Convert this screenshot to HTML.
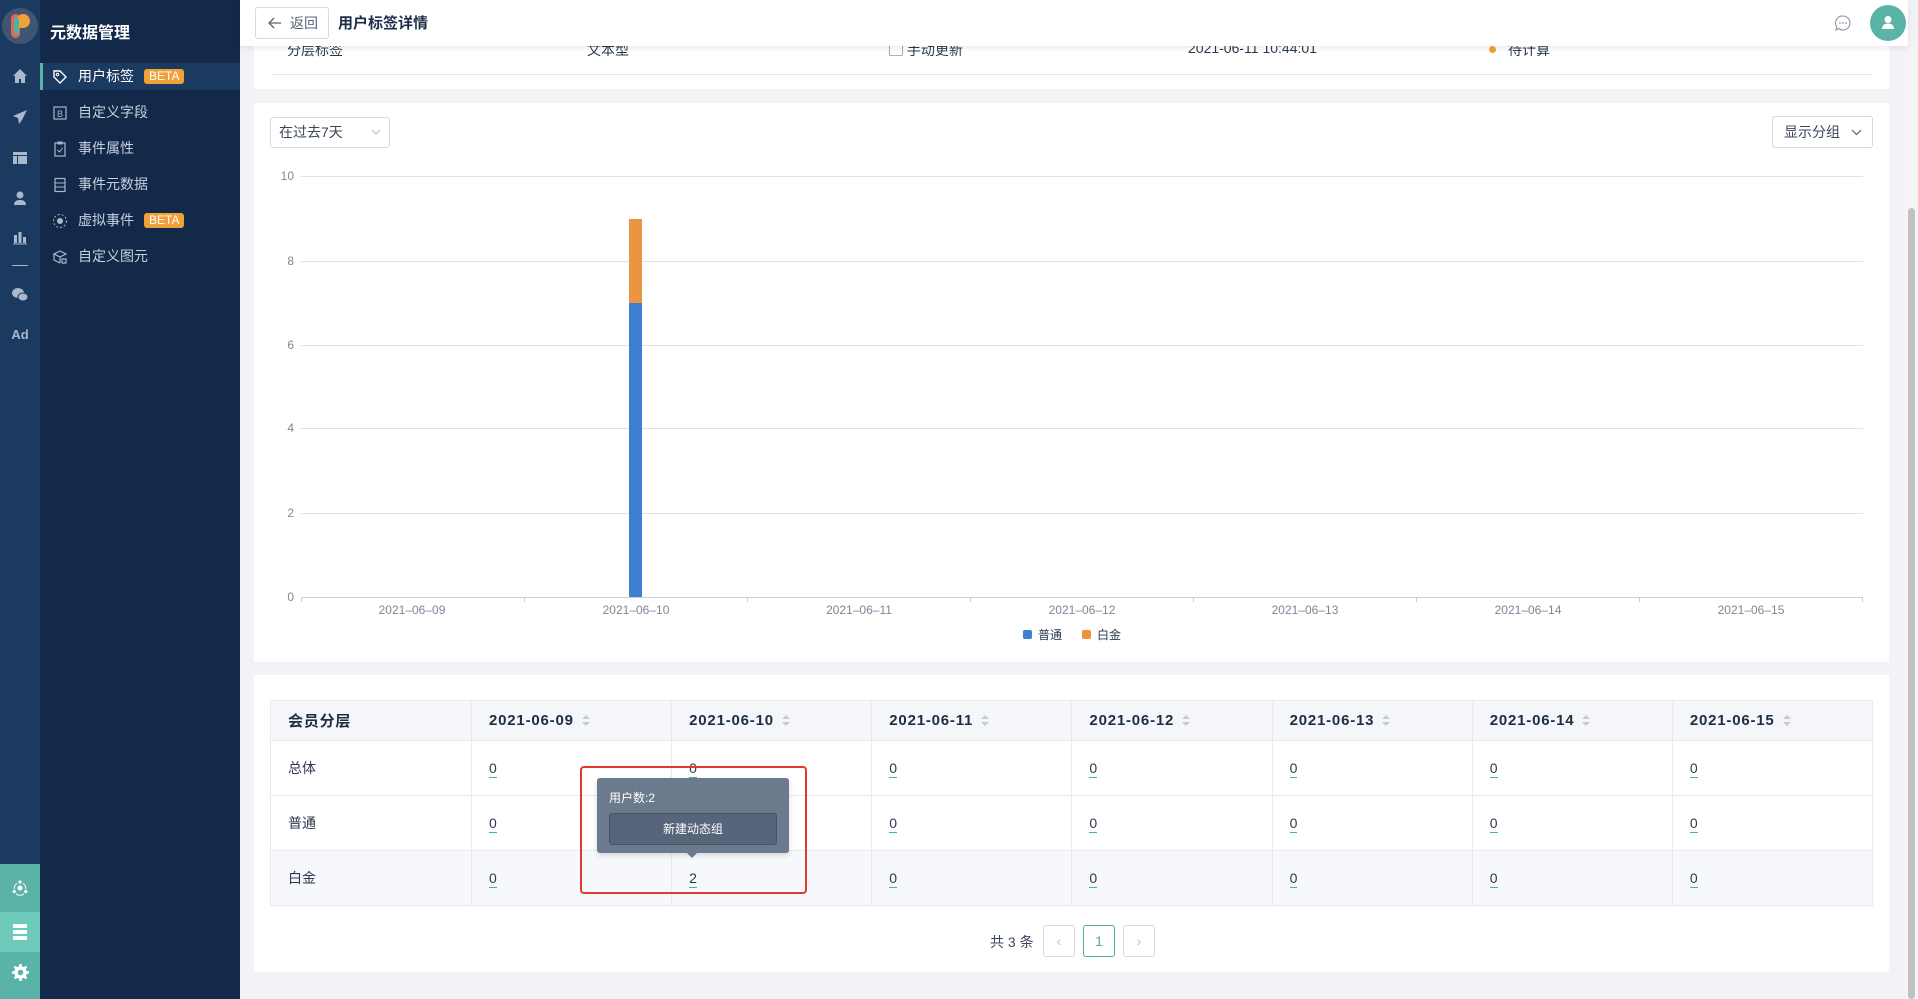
<!DOCTYPE html>
<html><head><meta charset="utf-8">
<style>
*{margin:0;padding:0;box-sizing:border-box}
body{width:1918px;height:999px;overflow:hidden;background:#f2f3f7;font-family:"Liberation Sans","Noto Sans CJK SC",sans-serif;color:#2b3a4e;position:relative}
.abs{position:absolute}
.rail{left:0;top:0;width:40px;height:999px;background:#1b3a60}
.side{left:40px;top:0;width:200px;height:999px;background:#12294a}
.ri{position:absolute;left:0;width:40px;text-align:center;color:#a9b8cc}
.mi{position:absolute;left:0;width:200px;height:27px;line-height:27px;color:#c5d0de;font-size:14px;padding-left:38px}
.mi svg{position:absolute;left:12px;top:6px}
.beta{display:inline-block;background:#f0a13a;color:#fff;font-size:12px;line-height:15px;padding:0 5px;border-radius:3px;margin-left:10px;vertical-align:1px}
.hdr{left:240px;top:0;width:1668px;height:46px;background:#fff;box-shadow:0 2px 6px rgba(0,0,0,.08);z-index:5}
.card{background:#fff;position:absolute}
.gl{position:absolute;left:301px;width:1562px;height:1px;background:#dfe2e7}
.yl{position:absolute;width:24px;left:270px;text-align:right;font-size:12px;color:#7c8798}
.xl{position:absolute;width:120px;text-align:center;font-size:12px;color:#7c8798;top:603px}
table{border-collapse:collapse;position:absolute;left:270px;top:700px;width:1603px;font-size:14px;table-layout:fixed}
td,th{border:1px solid #e8eaee;text-align:left;padding-left:17px}
th{height:40px;background:#f5f6fa;font-weight:bold;color:#1e2d45;font-size:15px;letter-spacing:.8px}
td{height:55px;color:#2b3a4e}
tr.alt td{background:#f6f8fc}
.u{border-bottom:1px solid #4cae9c;padding-bottom:1px}
.s{display:inline-block;width:8px;margin-left:8px;vertical-align:middle;position:relative;height:12px}
.s:before{content:"";position:absolute;left:0;top:0;border:4px solid transparent;border-bottom:4px solid #c5c9d0;border-top:0}
.s:after{content:"";position:absolute;left:0;top:7px;border:4px solid transparent;border-top:4px solid #c5c9d0;border-bottom:0}
.pg{position:absolute;top:925px;width:32px;height:32px;border:1px solid #d6dae0;border-radius:3px;text-align:center;line-height:30px;font-size:14px;color:#b8bfc9;background:#fff}
</style></head><body>
<div class="abs rail">
 <div class="abs" style="left:2px;top:8px;width:36px;height:36px;border-radius:50%;background:#3e5670;overflow:hidden">
  <div class="abs" style="left:9px;top:6px;width:9px;height:24px;border-radius:5px;background:#e8645a"></div>
  <div class="abs" style="left:14px;top:6px;width:14px;height:14px;border-radius:7px 7px 7px 2px;background:#f3a23a"></div>
  <div class="abs" style="left:12px;top:10px;width:5px;height:16px;background:#4cb4a6"></div>
 </div>
 <div class="ri" style="top:68px"><svg width="16" height="16" viewBox="0 0 16 16"><path d="M8 1L1 8h2v7h4v-4h2v4h4V8h2z" fill="#a9b8cc"/></svg></div>
 <div class="ri" style="top:109px"><svg width="16" height="16" viewBox="0 0 16 16"><path d="M15 1L1 7l5 2 1 6 3-4z M6 9l9-8" fill="#a9b8cc"/></svg></div>
 <div class="ri" style="top:150px"><svg width="16" height="16" viewBox="0 0 16 16"><path d="M1 2h14v3H1zM1 6h4v8H1zM6 6h9v8H6z" fill="#a9b8cc"/></svg></div>
 <div class="ri" style="top:190px"><svg width="16" height="16" viewBox="0 0 16 16"><circle cx="8" cy="5" r="3.5" fill="#a9b8cc"/><path d="M2 15c0-4 3-5 6-5s6 1 6 5z" fill="#a9b8cc"/></svg></div>
 <div class="ri" style="top:229px"><svg width="16" height="16" viewBox="0 0 16 16"><path d="M2 6h3v8H2zM6.5 3h3v11h-3zM11 8h3v6h-3zM1 14.5h14v1H1z" fill="#a9b8cc"/></svg></div>
 <div class="abs" style="left:12px;top:265px;width:16px;height:1px;background:#a9b8cc"></div>
 <div class="ri" style="top:287px"><svg width="18" height="16" viewBox="0 0 18 16"><ellipse cx="7" cy="6" rx="6" ry="5" fill="#a9b8cc"/><ellipse cx="12" cy="10" rx="5" ry="4" fill="#a9b8cc" stroke="#1b3a60" stroke-width="1"/></svg></div>
 <div class="ri" style="top:327px;font-weight:bold;font-size:13px">Ad</div>
 <div class="abs" style="left:0;top:864px;width:40px;height:48px;background:#5bb2a6"></div>
 <div class="abs" style="left:0;top:912px;width:40px;height:40px;background:#6ecbba"></div>
 <div class="abs" style="left:0;top:952px;width:40px;height:47px;background:#5bb2a6"></div>
 <div class="ri" style="top:880px"><svg width="16" height="16" viewBox="0 0 16 16"><circle cx="8" cy="8" r="2.5" fill="#fff"/><circle cx="8" cy="2" r="1.6" fill="#fff"/><circle cx="2.2" cy="11.5" r="1.6" fill="#fff"/><circle cx="13.8" cy="11.5" r="1.6" fill="#fff"/><path d="M5 3.5A6 6 0 0 0 2.3 9M11 3.5A6 6 0 0 1 13.7 9M4 13.8a6 6 0 0 0 8 0" stroke="#fff" fill="none"/></svg></div>
 <div class="ri" style="top:923px"><svg width="16" height="18" viewBox="0 0 16 18"><rect x="1" y="1" width="14" height="4" fill="#fff"/><rect x="1" y="7" width="14" height="4" fill="#fff"/><rect x="1" y="13" width="14" height="4" fill="#fff"/></svg></div>
 <div class="ri" style="top:964px"><svg width="17" height="17" viewBox="0 0 16 16"><path d="M7 0h2l.4 2.2 1.6.7 1.9-1.3 1.4 1.4-1.3 1.9.7 1.6L16 7v2l-2.2.4-.7 1.6 1.3 1.9-1.4 1.4-1.9-1.3-1.6.7L9 16H7l-.4-2.2-1.6-.7-1.9 1.3-1.4-1.4 1.3-1.9-.7-1.6L0 9V7l2.2-.4.7-1.6-1.3-1.9 1.4-1.4 1.9 1.3 1.6-.7z" fill="#fff"/><circle cx="8" cy="8" r="2.6" fill="#5bb2a6"/></svg></div>
</div>
<div class="abs side">
 <div class="abs" style="left:10px;top:19px;color:#fff;font-size:16px;font-weight:bold">元数据管理</div>
 <div class="abs" style="left:0;top:63px;width:200px;height:27px;background:#1b3a60;border-left:3px solid #5bb2a6"></div>
 <div class="mi" style="top:63px;color:#fff"><svg width="16" height="16" viewBox="0 0 16 16"><path d="M2 2h6l6 6-6 6-6-6z" fill="none" stroke="#fff" stroke-width="1.4"/><circle cx="5.5" cy="5.5" r="1.3" fill="none" stroke="#fff"/></svg>用户标签<span class="beta">BETA</span></div>
 <div class="mi" style="top:99px"><svg width="16" height="16" viewBox="0 0 16 16"><rect x="2" y="2" width="12" height="12" fill="none" stroke="#aab7c8" stroke-width="1.2"/><text x="5" y="12" font-size="9" fill="#aab7c8" font-family="Liberation Sans">B</text></svg>自定义字段</div>
 <div class="mi" style="top:135px"><svg width="16" height="16" viewBox="0 0 16 16"><rect x="3" y="2" width="10" height="13" fill="none" stroke="#aab7c8" stroke-width="1.2"/><path d="M6 1h4v2H6zM5.5 9l2 2 3-4" fill="none" stroke="#aab7c8"/></svg>事件属性</div>
 <div class="mi" style="top:171px"><svg width="16" height="16" viewBox="0 0 16 16"><rect x="3" y="1.5" width="10" height="13" fill="none" stroke="#aab7c8" stroke-width="1.2"/><path d="M3 6h10M3 10h10" stroke="#aab7c8"/></svg>事件元数据</div>
 <div class="mi" style="top:207px"><svg width="16" height="16" viewBox="0 0 16 16"><circle cx="8" cy="8" r="3" fill="#aab7c8"/><circle cx="8" cy="8" r="6.5" fill="none" stroke="#aab7c8" stroke-dasharray="2 2"/></svg>虚拟事件<span class="beta">BETA</span></div>
 <div class="mi" style="top:243px"><svg width="16" height="16" viewBox="0 0 16 16"><path d="M2 5l6-3 6 3-6 3zM2 5v6l6 3M8 8v6M10 10h4v4h-4z" fill="none" stroke="#aab7c8" stroke-width="1.2"/></svg>自定义图元</div>
</div>
<div class="abs hdr">
 <div class="abs" style="left:15px;top:7px;width:74px;height:32px;border:1px solid #d6dae0;border-radius:3px;font-size:14px;color:#56647a;line-height:30px;padding-left:34px">返回
  <svg class="abs" style="left:12px;top:9px" width="14" height="12" viewBox="0 0 14 12"><path d="M13 6H2M6 1L1 6l5 5" fill="none" stroke="#56647a" stroke-width="1.3"/></svg></div>
 <div class="abs" style="left:98px;top:12px;font-size:15px;font-weight:bold;color:#1e2d45">用户标签详情</div>
 <svg class="abs" style="left:1594px;top:14px" width="18" height="18" viewBox="0 0 18 18"><path d="M9 2a7 7 0 1 1-4.5 12.4L2 16l.8-3A7 7 0 0 1 9 2z" fill="none" stroke="#8b96a6" stroke-width="1.1"/><circle cx="6" cy="9" r=".9" fill="#8b96a6"/><circle cx="9" cy="9" r=".9" fill="#8b96a6"/><circle cx="12" cy="9" r=".9" fill="#8b96a6"/></svg>
 <div class="abs" style="left:1630px;top:5px;width:36px;height:36px;border-radius:50%;background:#5bb2a6"><svg class="abs" style="left:11px;top:10px" width="14" height="15" viewBox="0 0 14 15"><circle cx="7" cy="4.5" r="3.5" fill="#fff"/><path d="M1 14c0-4 3-5.5 6-5.5s6 1.5 6 5.5z" fill="#fff"/></svg></div>
</div>
<div class="card" style="left:254px;top:20px;width:1635px;height:69px">
 <div class="abs" style="left:33px;top:20px;font-size:14px">分层标签</div>
 <div class="abs" style="left:333px;top:20px;font-size:14px">文本型</div>
 <div class="abs" style="left:635px;top:20px;font-size:14px">▢ 手动更新</div>
 <div class="abs" style="left:934px;top:20px;font-size:14px">2021-06-11 10:44:01</div>
 <div class="abs" style="left:1235px;top:20px;font-size:14px"><span style="display:inline-block;width:7px;height:7px;border-radius:50%;background:#f0a13a;margin-right:12px;vertical-align:2px"></span>待计算</div>
 <div class="abs" style="left:17px;top:54px;width:1602px;height:1px;background:#e3e6ea"></div>
</div>
<div class="card" style="left:254px;top:103px;width:1635px;height:559px"></div>
<div class="abs" style="left:270px;top:117px;width:120px;height:31px;border:1px solid #d6dae0;border-radius:3px;font-size:14px;line-height:29px;padding-left:8px;color:#3a4759">在过去7天<svg class="abs" style="left:100px;top:11px" width="10" height="7" viewBox="0 0 10 7"><path d="M1 1l4 4 4-4" fill="none" stroke="#b8bfc9"/></svg></div>
<div class="abs" style="left:1772px;top:116px;width:101px;height:32px;border:1px solid #d6dae0;border-radius:3px;font-size:14px;line-height:30px;padding-left:11px;color:#3a4759">显示分组<svg class="abs" style="left:78px;top:12px" width="11" height="7" viewBox="0 0 11 7"><path d="M1 1l4.5 4.5L10 1" fill="none" stroke="#56647a" stroke-width="1.2"/></svg></div>
<div class="gl" style="top:176px"></div><div class="gl" style="top:261px"></div><div class="gl" style="top:345px"></div><div class="gl" style="top:428px"></div><div class="gl" style="top:513px"></div><div class="gl" style="top:597px;background:#ccd0d6"></div>
<div class="yl" style="top:169px">10</div><div class="yl" style="top:254px">8</div><div class="yl" style="top:338px">6</div><div class="yl" style="top:421px">4</div><div class="yl" style="top:506px">2</div><div class="yl" style="top:590px">0</div>
<div class="abs" style="left:301px;top:597px;width:1px;height:5px;background:#ccd0d6"></div>
<div class="abs" style="left:524px;top:597px;width:1px;height:5px;background:#ccd0d6"></div>
<div class="abs" style="left:747px;top:597px;width:1px;height:5px;background:#ccd0d6"></div>
<div class="abs" style="left:970px;top:597px;width:1px;height:5px;background:#ccd0d6"></div>
<div class="abs" style="left:1193px;top:597px;width:1px;height:5px;background:#ccd0d6"></div>
<div class="abs" style="left:1416px;top:597px;width:1px;height:5px;background:#ccd0d6"></div>
<div class="abs" style="left:1639px;top:597px;width:1px;height:5px;background:#ccd0d6"></div>
<div class="abs" style="left:1862px;top:597px;width:1px;height:5px;background:#ccd0d6"></div>
<div class="abs" style="left:629px;top:219px;width:13px;height:84px;background:#ec9540"></div>
<div class="abs" style="left:629px;top:303px;width:13px;height:294px;background:#3d7fd0"></div>
<div class="xl" style="left:352px">2021–06–09</div><div class="xl" style="left:576px">2021–06–10</div><div class="xl" style="left:799px">2021–06–11</div><div class="xl" style="left:1022px">2021–06–12</div><div class="xl" style="left:1245px">2021–06–13</div><div class="xl" style="left:1468px">2021–06–14</div><div class="xl" style="left:1691px">2021–06–15</div>
<div class="abs" style="left:1023px;top:626px;font-size:12px;color:#2b3a4e"><span style="display:inline-block;width:9px;height:9px;border-radius:2px;background:#3d7fd0;margin-right:6px"></span>普通<span style="display:inline-block;width:9px;height:9px;border-radius:2px;background:#ec9540;margin:0 6px 0 20px"></span>白金</div>
<div class="card" style="left:254px;top:675px;width:1635px;height:297px"></div>
<table>
<colgroup><col style="width:201px"><col><col><col><col><col><col><col></colgroup>
<tr><th>会员分层</th><th>2021-06-09<span class="s"></span></th><th>2021-06-10<span class="s"></span></th><th>2021-06-11<span class="s"></span></th><th>2021-06-12<span class="s"></span></th><th>2021-06-13<span class="s"></span></th><th>2021-06-14<span class="s"></span></th><th>2021-06-15<span class="s"></span></th></tr>
<tr><td>总体</td><td><span class="u">0</span></td><td><span class="u">0</span></td><td><span class="u">0</span></td><td><span class="u">0</span></td><td><span class="u">0</span></td><td><span class="u">0</span></td><td><span class="u">0</span></td></tr>
<tr><td>普通</td><td><span class="u">0</span></td><td><span class="u">0</span></td><td><span class="u">0</span></td><td><span class="u">0</span></td><td><span class="u">0</span></td><td><span class="u">0</span></td><td><span class="u">0</span></td></tr>
<tr class="alt"><td>白金</td><td><span class="u">0</span></td><td><span class="u">2</span></td><td><span class="u">0</span></td><td><span class="u">0</span></td><td><span class="u">0</span></td><td><span class="u">0</span></td><td><span class="u">0</span></td></tr>
</table>
<div class="abs" style="left:597px;top:778px;width:192px;height:75px;background:#6b7a8c;border-radius:3px;box-shadow:0 2px 6px rgba(0,0,0,.15)">
 <div class="abs" style="left:12px;top:11px;font-size:12px;color:#fff">用户数:2</div>
 <div class="abs" style="left:12px;top:35px;width:168px;height:32px;background:#56657a;border:1px solid #445266;border-radius:3px;text-align:center;line-height:30px;color:#fff;font-size:12px">新建动态组</div>
 <div class="abs" style="left:90px;top:75px;border:5px solid transparent;border-top:5px solid #6b7a8c"></div>
</div>
<div class="abs" style="left:580px;top:766px;width:227px;height:128px;border:2px solid #e03a2e;border-radius:4px"></div>
<div class="abs" style="left:990px;top:932px;font-size:14px;color:#3a4759">共 3 条</div>
<div class="pg" style="left:1043px">‹</div>
<div class="pg" style="left:1083px;border-color:#4cae9c;color:#4cae9c">1</div>
<div class="pg" style="left:1123px">›</div>
<div class="abs" style="left:1906px;top:46px;width:12px;height:953px;background:#f5f5f7"></div>
<div class="abs" style="left:1908px;top:208px;width:7px;height:791px;background:#c1c1c1;border-radius:4px"></div>
</body></html>
